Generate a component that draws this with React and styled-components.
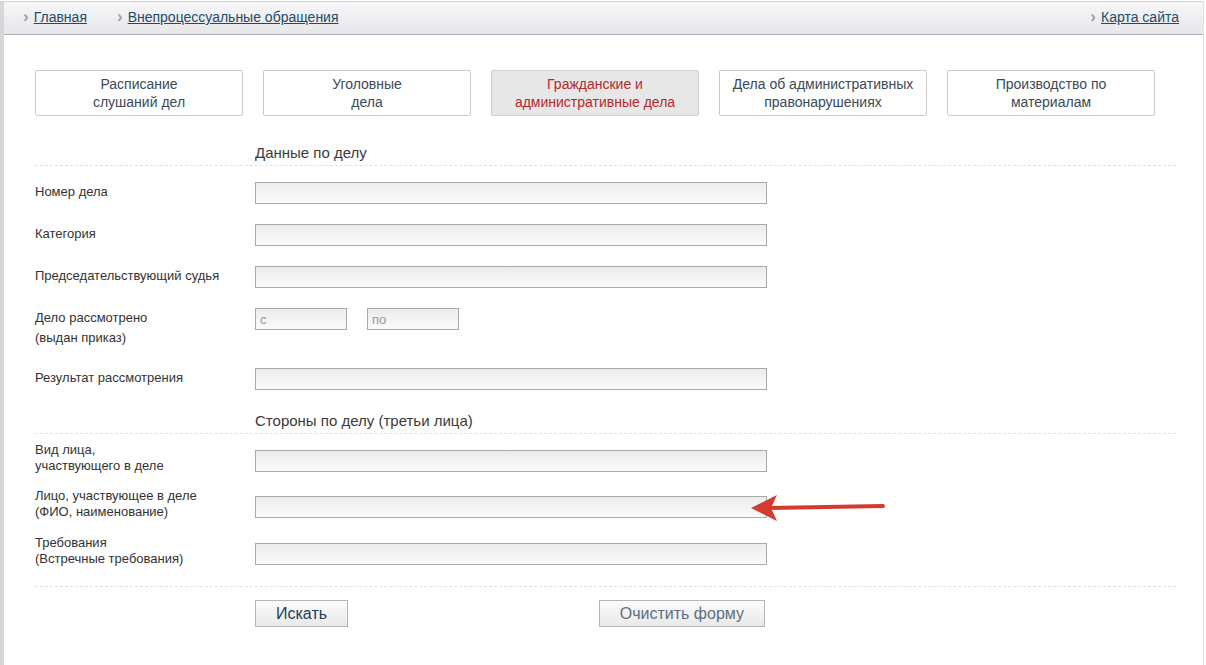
import React from "react";
import styled, { createGlobalStyle } from "styled-components";

const GlobalStyle = createGlobalStyle`
  html, body {
    margin: 0;
    padding: 0;
    background: #fff;
    font-family: "Liberation Sans", Arial, sans-serif;
  }
`;

const tabs = [
  { id: "schedule", lines: ["Расписание", "слушаний дел"] },
  { id: "criminal", lines: ["Уголовные", "дела"] },
  { id: "civil", lines: ["Гражданские и", "административные дела"], active: true },
  { id: "admin", lines: ["Дела об административных", "правонарушениях"] },
  { id: "materials", lines: ["Производство по", "материалам"] }
];

const caseFields = [
  { id: "num", label: ["Номер дела"] },
  { id: "cat", label: ["Категория"] },
  { id: "judge", label: ["Председательствующий судья"] },
  { id: "date", label: ["Дело рассмотрено", "(выдан приказ)"], dates: true },
  { id: "result", label: ["Результат рассмотрения"] }
];

const partyFields = [
  { id: "kind", label: ["Вид лица,", "участвующего в деле"] },
  { id: "person", label: ["Лицо, участвующее в деле", "(ФИО, наименование)"], arrow: true },
  { id: "claims", label: ["Требования", "(Встречные требования)"] }
];

const App = () => {
  return (
    <Page>
      <GlobalStyle />
      <Main>
        <TopBar>
          <Crumbs>
            <Crumb>
              <Chevron>›</Chevron>
              <CrumbLink href="#">Главная</CrumbLink>
            </Crumb>
            <Crumb>
              <Chevron>›</Chevron>
              <CrumbLink href="#">Внепроцессуальные обращения</CrumbLink>
            </Crumb>
          </Crumbs>
          <Crumb>
            <Chevron>›</Chevron>
            <CrumbLink href="#">Карта сайта</CrumbLink>
          </Crumb>
        </TopBar>

        <Content>
          <Tabs>
            {tabs.map((t) => (
              <Tab key={t.id} $active={t.active}>
                {t.lines.map((l) => (
                  <span key={l}>{l}</span>
                ))}
              </Tab>
            ))}
          </Tabs>

          <SectionTitle $first>Данные по делу</SectionTitle>
          <Fields>
            {caseFields.map((f) => (
              <Row key={f.id}>
                <Label>
                  {f.label.map((l) => (
                    <span key={l}>{l}</span>
                  ))}
                </Label>
                {f.dates ? (
                  <Dates>
                    <DateInput placeholder="с" />
                    <DateInput placeholder="по" />
                  </Dates>
                ) : (
                  <TextInput />
                )}
              </Row>
            ))}
          </Fields>

          <SectionTitle>Стороны по делу (третьи лица)</SectionTitle>
          <Fields>
            {partyFields.map((f) => (
              <PartyRow key={f.id}>
                <PartyLabel>
                  {f.label.map((l) => (
                    <span key={l}>{l}</span>
                  ))}
                </PartyLabel>
                <InputCell>
                  <TextInput />
                  {f.arrow && (
                    <Arrow width="140" height="32" viewBox="0 0 140 32">
                      <line x1="20" y1="16" x2="134" y2="14" stroke="#d43a2f" strokeWidth="4" strokeLinecap="round" />
                      <polygon points="2,16 28,3 22,16 28,29" fill="#d43a2f" />
                    </Arrow>
                  )}
                </InputCell>
              </PartyRow>
            ))}
          </Fields>

          <Actions>
            <Buttons>
              <Button $primary>Искать</Button>
              <Button>Очистить форму</Button>
            </Buttons>
          </Actions>
        </Content>
      </Main>
    </Page>
  );
};

const Page = styled.div`
  border-left: 4px solid #d7d7d9;
  padding-right: 2px;
  min-height: 665px;
  box-sizing: border-box;
`;

const Main = styled.div`
  border-right: 1px solid #e2e2e4;
  min-height: 665px;
`;

const TopBar = styled.div`
  height: 30px;
  margin-top: 1px;
  border-top: 1px solid #cfd3d8;
  border-bottom: 1px solid #a9b1ba;
  background: linear-gradient(#f7f7f8, #e6e7e9);
  display: flex;
  align-items: center;
  justify-content: space-between;
  padding: 0 24px 2px 19px;
`;

const Crumbs = styled.div`
  display: flex;
  gap: 30px;
`;

const Crumb = styled.div`
  display: flex;
  align-items: center;
  gap: 5px;
`;

const Chevron = styled.span`
  color: #9a9da2;
  font-size: 17px;
  font-weight: bold;
  line-height: 1;
  margin-top: -2px;
`;

const CrumbLink = styled.a`
  font-size: 14px;
  color: #1d4b6b;
  text-decoration: underline;
`;

const Content = styled.div`
  padding: 35px 27px 0 31px;
`;

const Tabs = styled.div`
  display: flex;
  gap: 20px;
`;

const Tab = styled.div`
  width: 208px;
  height: 46px;
  box-sizing: border-box;
  border: 1px solid ${(p) => (p.$active ? "#cfcfcf" : "#c9c9c9")};
  border-radius: 2px;
  background: ${(p) => (p.$active ? "#e7e7e7" : "#fff")};
  color: ${(p) => (p.$active ? "#b52a2a" : "#3b4a56")};
  font-size: 14px;
  line-height: 18px;
  display: flex;
  flex-direction: column;
  align-items: center;
  justify-content: center;
  text-align: center;
`;

const SectionTitle = styled.div`
  margin-top: ${(p) => (p.$first ? "28px" : "22px")};
  padding: 0 0 3px 220px;
  font-size: 15px;
  line-height: 18px;
  color: #3a3a3a;
  border-bottom: 1px dashed #e0e0e0;
`;

const Fields = styled.div`
  padding-top: 16px;
`;

const Row = styled.div`
  display: grid;
  grid-template-columns: 220px 512px;
  align-items: start;
  margin-bottom: 20px;
`;

const Label = styled.div`
  font-size: 13px;
  line-height: 20px;
  color: #333;
  display: flex;
  flex-direction: column;
`;

const PartyRow = styled.div`
  display: grid;
  grid-template-columns: 220px 512px;
  align-items: start;
  height: 22px;
  margin-bottom: 24px;
  &:nth-child(2) {
    margin-bottom: 25px;
  }
  &:last-child {
    margin-bottom: 21px;
  }
`;

const PartyLabel = styled.div`
  font-size: 13px;
  line-height: 16px;
  color: #333;
  margin-top: -8px;
  display: flex;
  flex-direction: column;
`;

const InputCell = styled.div`
  position: relative;
`;

const TextInput = styled.input`
  display: block;
  width: 512px;
  height: 22px;
  box-sizing: border-box;
  border: 1px solid #a9a9a9;
  background: linear-gradient(#ececec, #fbfbfb);
  font-family: inherit;
  font-size: 13px;
  padding: 0 4px;
  outline: none;
`;

const Dates = styled.div`
  display: flex;
  gap: 20px;
`;

const DateInput = styled(TextInput)`
  width: 92px;
  &::placeholder {
    color: #9a9a9a;
  }
`;

const Arrow = styled.svg`
  position: absolute;
  left: 494px;
  top: -4px;
`;

const Actions = styled.div`
  border-top: 1px dashed #e0e0e0;
  padding: 13px 0 0 220px;
`;

const Buttons = styled.div`
  width: 510px;
  display: flex;
  justify-content: space-between;
`;

const Button = styled.button`
  height: 27px;
  padding: 0 20px;
  border: 1px solid #b5b5b5;
  background: linear-gradient(#fbfbfb, #e9e9e9);
  font-family: inherit;
  font-size: 16px;
  color: ${(p) => (p.$primary ? "#1f3c57" : "#5c6f80")};
  cursor: pointer;
`;

export default App;
